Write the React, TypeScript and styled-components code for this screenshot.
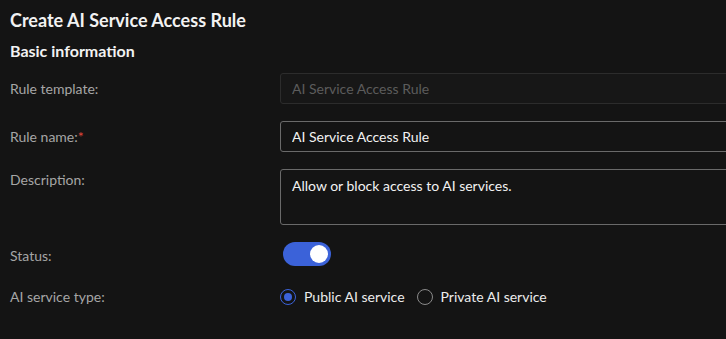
import React, { useState } from "react";
import styled, { createGlobalStyle } from "styled-components";

const GlobalStyle = createGlobalStyle`
  html, body {
    margin: 0;
    padding: 0;
    background: #141414;
    overflow: hidden;
  }
  body {
    font-family: "Lato", "Noto Sans", sans-serif;
    color: #e6e6e6;
  }
`;

const Page = styled.div`
  width: 726px;
  height: 339px;
  padding: 8px 0 0 10px;
  box-sizing: border-box;
  overflow: hidden;
`;

const Title = styled.h1`
  margin: 0;
  font-size: 18px;
  line-height: 25px;
  font-weight: 700;
  color: #f2f2f2;
`;

const Section = styled.h2`
  margin: 7px 0 0;
  font-size: 16px;
  line-height: 22px;
  font-weight: 700;
  color: #f2f2f2;
`;

const Form = styled.div`
  display: flex;
  flex-direction: column;
  margin-top: 11px;
`;

const Row = styled.div<{ $top?: boolean; $gap?: number }>`
  display: grid;
  grid-template-columns: 270px 480px;
  align-items: ${(p) => (p.$top ? "start" : "center")};
  margin-bottom: ${(p) => p.$gap ?? 17}px;
`;

const Label = styled.label<{ $pad?: number }>`
  font-size: 14px;
  color: #a6a6a6;
  padding-top: ${(p) => p.$pad ?? 0}px;
`;

const Required = styled.span`
  color: #e0453a;
`;

const Input = styled.input`
  box-sizing: border-box;
  width: 100%;
  height: 31px;
  padding: 0 11px;
  background: #141414;
  border: 1px solid #6a6a6a;
  border-radius: 3px;
  color: #f2f2f2;
  font-family: inherit;
  font-size: 14px;
  outline: none;

  &:disabled {
    background: #171717;
    border-color: #2c2c2c;
    color: #5c5c5c;
  }
`;

const TextArea = styled.textarea`
  box-sizing: border-box;
  width: 100%;
  height: 56px;
  padding: 7px 11px;
  background: #141414;
  border: 1px solid #6a6a6a;
  border-radius: 3px;
  color: #f2f2f2;
  font-family: inherit;
  font-size: 14px;
  line-height: 17px;
  resize: none;
  outline: none;
`;

const Switch = styled.button<{ $on: boolean }>`
  position: relative;
  width: 48px;
  height: 24px;
  margin-left: 3px;
  padding: 0;
  border: none;
  border-radius: 12px;
  background: ${(p) => (p.$on ? "#3b62d9" : "#4a4a4a")};
  cursor: pointer;
`;

const Knob = styled.span<{ $on: boolean }>`
  position: absolute;
  top: 3px;
  left: ${(p) => (p.$on ? "27px" : "3px")};
  width: 18px;
  height: 18px;
  border-radius: 50%;
  background: #ffffff;
`;

const RadioGroup = styled.div`
  display: flex;
  align-items: center;
  gap: 12px;
`;

const RadioOption = styled.label`
  display: flex;
  align-items: center;
  gap: 8px;
  font-size: 14px;
  color: #ececec;
  cursor: pointer;
`;

const RadioDot = styled.span<{ $checked: boolean }>`
  box-sizing: border-box;
  width: 16px;
  height: 16px;
  border-radius: 50%;
  border: 1.5px solid ${(p) => (p.$checked ? "#3b62d9" : "#8a8a8a")};
  display: flex;
  align-items: center;
  justify-content: center;

  &::after {
    content: "";
    width: 8px;
    height: 8px;
    border-radius: 50%;
    background: ${(p) => (p.$checked ? "#3b62d9" : "transparent")};
  }
`;

export default function App() {
  const [enabled, setEnabled] = useState(true);
  const [kind, setKind] = useState("public");

  return (
    <Page>
      <GlobalStyle />
      <Title>Create AI Service Access Rule</Title>
      <Section>Basic information</Section>
      <Form>
        <Row>
          <Label>Rule template:</Label>
          <Input disabled value="AI Service Access Rule" readOnly />
        </Row>
        <Row>
          <Label>
            Rule name:<Required>*</Required>
          </Label>
          <Input defaultValue="AI Service Access Rule" />
        </Row>
        <Row $top $gap={17}>
          <Label $pad={2}>Description:</Label>
          <TextArea defaultValue="Allow or block access to AI services." />
        </Row>
        <Row $gap={19}>
          <Label>Status:</Label>
          <div>
            <Switch $on={enabled} onClick={() => setEnabled(!enabled)}>
              <Knob $on={enabled} />
            </Switch>
          </div>
        </Row>
        <Row>
          <Label>AI service type:</Label>
          <RadioGroup>
            <RadioOption onClick={() => setKind("public")}>
              <RadioDot $checked={kind === "public"} />
              Public AI service
            </RadioOption>
            <RadioOption onClick={() => setKind("private")}>
              <RadioDot $checked={kind === "private"} />
              Private AI service
            </RadioOption>
          </RadioGroup>
        </Row>
      </Form>
    </Page>
  );
}
